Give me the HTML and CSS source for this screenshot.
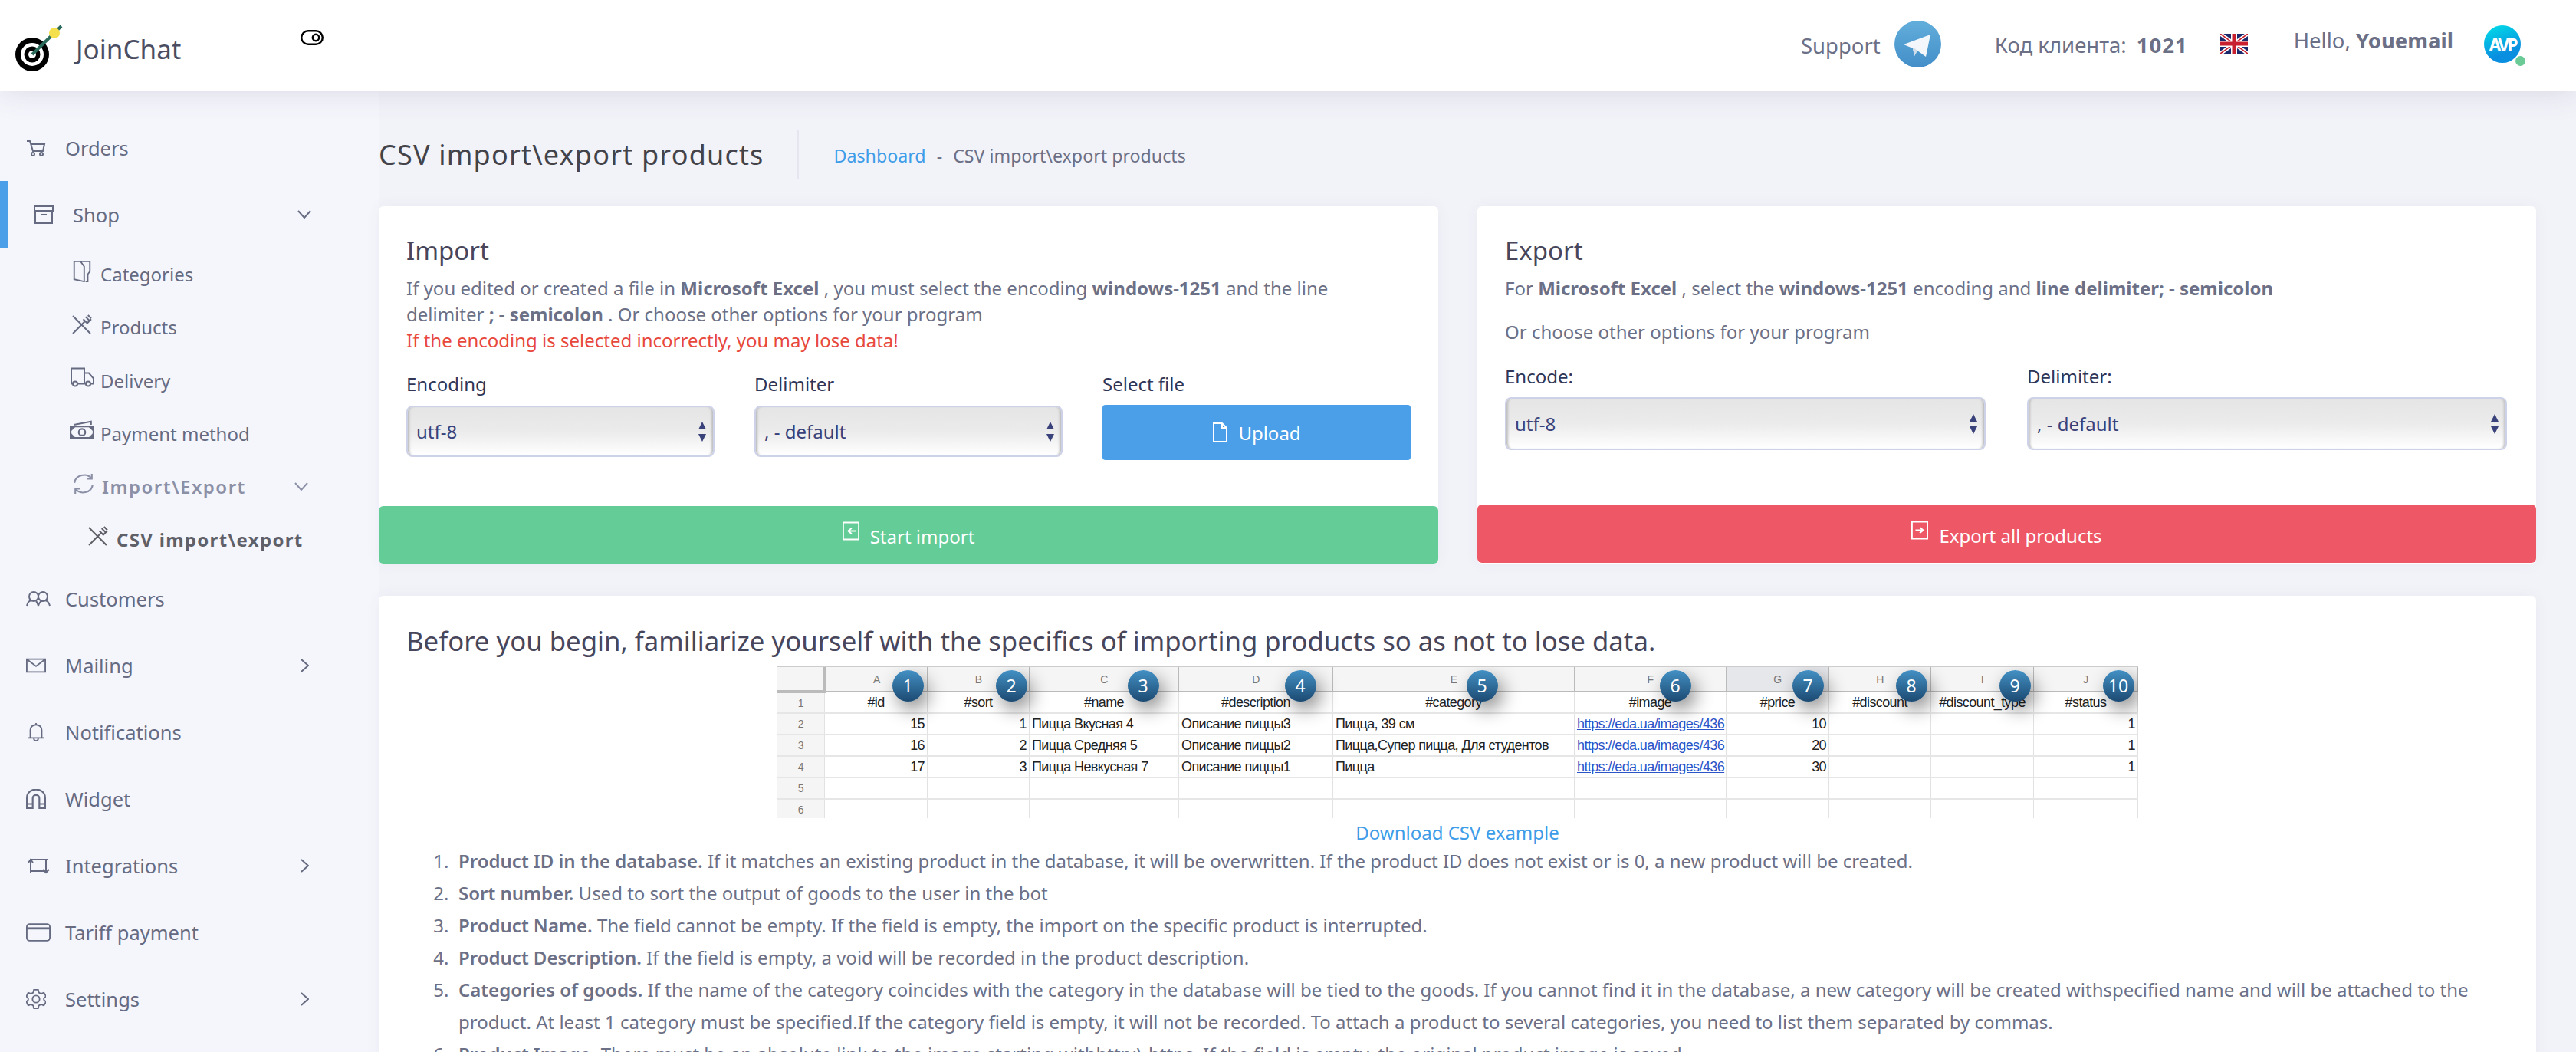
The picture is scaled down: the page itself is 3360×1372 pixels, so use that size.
FILE: index.html
```html
<!DOCTYPE html>
<html lang="en">

<head>
    <meta charset="UTF-8">
    <title>CSV import\export products</title>
    <link rel="stylesheet" href="styles.css">
</head>

<body>
    <header class="topbar">
        <a class="logo" href="#">
            <svg class="logo-mark" viewBox="0 0 70 60" width="70" height="60">
                <circle cx="22" cy="39" r="22" fill="#000" />
                <circle cx="22" cy="39" r="15" fill="#fff" />
                <circle cx="22" cy="39" r="10.5" fill="#000" />
                <circle cx="22" cy="39" r="5" fill="#fff" />
                <path d="M22 39 60 2" stroke="#2a6b5c" stroke-width="4" />
                <circle cx="51" cy="11" r="7" fill="#f4e04d" />
            </svg>
            <span>JoinChat</span>
        </a>
        <svg class="toggle" viewBox="0 0 30 20" width="30" height="20">
            <rect x="1.2" y="1.2" width="27.6" height="17.6" rx="8.8" fill="none" stroke="#000" stroke-width="2.4" />
            <circle cx="20" cy="10" r="4.2" fill="none" stroke="#000" stroke-width="2.4" />
        </svg>
        <div class="top-right">
            <span class="support">Support</span>
            <svg class="telegram" viewBox="0 0 61 61" width="61" height="61">
                <defs>
                    <linearGradient id="tg" x1="0" y1="0" x2="0" y2="1">
                        <stop offset="0" stop-color="#62aedb" />
                        <stop offset="1" stop-color="#438ec8" />
                    </linearGradient>
                </defs>
                <circle cx="30.500" cy="30.500" r="30.500" fill="url(#tg)" />
                <path d="M12 31 47 18 41 47 30 39 26 46 24 36Z" fill="#f3f7fb" />
                <path d="M24 36 26 46 30 39 25 35Z" fill="#cfdde9" />
            </svg>
            <span class="client">Код клиента: <b>1021</b></span>
            <svg class="flag" viewBox="0 0 36 26" width="36" height="26">
                <rect width="36" height="26" fill="#1a2a6c" />
                <path d="M0 0 36 26M36 0 0 26" stroke="#fff" stroke-width="5" />
                <path d="M0 0 36 26M36 0 0 26" stroke="#c8202f" stroke-width="1.6" />
                <path d="M18 0V26M0 13H36" stroke="#fff" stroke-width="8" />
                <path d="M18 0V26M0 13H36" stroke="#c8202f" stroke-width="5" />
            </svg>
            <span class="hello">Hello, <b>Youemail</b></span>
            <span class="avatar">AVP<i class="online"></i></span>
        </div>
    </header>

    <div class="page">
        <nav class="sidebar">
            <a class="nav-item" href="#">
                <span class="nav-icon"><svg viewBox="0 0 26 22"><path d="M1 2H5L9 15H22L24 6H6" /><circle cx="9" cy="19" r="2" /><circle cx="20" cy="19" r="2" /></svg></span>
                Orders
            </a>
            <a class="nav-item active" href="#">
                <span class="nav-icon"><svg viewBox="0 0 26 24"><path d="M1 1H25V7H1ZM2 7V23H24V7M9 12H17" /></svg></span>
                Shop
                <svg class="chev" viewBox="0 0 18 11"><path d="M1 1 9 10 17 1" /></svg>
            </a>
            <a class="sub-item" href="#">
                <span class="sub-icon"><svg viewBox="0 0 24 30"><path d="M1 1H23V15L20 19V29H17M1 1V26L15 29V8L10 1M1 26" /></svg></span>
                Categories
            </a>
            <a class="sub-item" href="#">
                <span class="sub-icon"><svg viewBox="0 0 25 25"><use href="#cutlery" /></svg></span>
                Products
            </a>
            <a class="sub-item" href="#">
                <span class="sub-icon"><svg class="wide" viewBox="0 0 32 25"><path d="M4 21H2V1H19V21H10M19 7H25L31 14V21H27M19 21H21" /><circle cx="7" cy="21" r="3" /><circle cx="24" cy="21" r="3" /></svg></span>
                Delivery
            </a>
            <a class="sub-item" href="#">
                <span class="sub-icon"><svg class="wide" viewBox="0 0 30 23"><path d="M1 7H29V21H1ZM5 5 26 1V5" /><circle cx="15" cy="14" r="4" /><path class="solid" d="M1 7H6L1 12ZM29 7V12L24 7ZM1 21V16L6 21ZM29 21H24L29 16Z" /></svg></span>
                Payment method
            </a>
            <a class="sub-item open" href="#">
                <span class="sub-icon"><svg viewBox="0 0 24 26"><path d="M1 12C2 2 16 -1 22 7M23 14C22 24 8 27 2 19M22 1V7H16M2 25V19H8" /></svg></span>
                Import\Export
                <svg class="chev" viewBox="0 0 18 11"><path d="M1 1 9 10 17 1" /></svg>
            </a>
            <a class="csv-item" href="#">
                <span class="sub-icon"><svg viewBox="0 0 25 25"><use href="#cutlery" /></svg></span>
                CSV import\export
            </a>
            <a class="nav-item" href="#">
                <span class="nav-icon"><svg class="wide" viewBox="0 0 32 20"><circle cx="10" cy="7" r="6" /><circle cx="22" cy="7" r="6" /><path d="M1 19C2 14 5 12 8 12M13 13C15 15 15 17 16 19M16 19C17 15 19 12 24 12 28 12 30 15 31 19" /></svg></span>
                Customers
            </a>
            <a class="nav-item" href="#">
                <span class="nav-icon"><svg viewBox="0 0 28 20"><path d="M1 1H27V19H1ZM1 1 14 11 27 1" /></svg></span>
                Mailing
                <svg class="chev side" viewBox="0 0 11 18"><path d="M1 1 10 9 1 17" /></svg>
            </a>
            <a class="nav-item" href="#">
                <span class="nav-icon"><svg viewBox="0 0 24 28"><path d="M1 22H23M4 22V11C4 1 20 1 20 11V22M12 1V3M9 23C9 27 15 27 15 23" /></svg></span>
                Notifications
            </a>
            <a class="nav-item" href="#">
                <span class="nav-icon"><svg viewBox="0 0 24 24"><path d="M1 23V11C1 -3 23 -3 23 11V23H16V11C16 6 8 6 8 11V23ZM1 18H8M16 18H23" /></svg></span>
                Widget
            </a>
            <a class="nav-item" href="#">
                <span class="nav-icon"><svg class="wide" viewBox="0 0 32 22"><path d="M6 20V3H28M3 7 6 3 9 7M6 18H26V3M22 16 26 20 30 16" /></svg></span>
                Integrations
                <svg class="chev side" viewBox="0 0 11 18"><path d="M1 1 10 9 1 17" /></svg>
            </a>
            <a class="nav-item" href="#">
                <span class="nav-icon"><svg class="wide" viewBox="0 0 34 25"><rect x="1" y="1" width="32" height="23" rx="4" /><path d="M1 7H33" stroke-width="3" /></svg></span>
                Tariff payment
            </a>
            <a class="nav-item" href="#">
                <span class="nav-icon"><svg viewBox="0 0 28 28"><path d="M11 1H17L18 5 21 6.500 25 5 28 10 25 13V15L28 18 25 23 21 21.500 18 23 17 27H11L10 23 7 21.500 3 23 0.500 18 3 15V13L0.500 10 3 5 7 6.500 10 5Z" /><circle cx="14" cy="14" r="5" /></svg></span>
                Settings
                <svg class="chev side" viewBox="0 0 11 18"><path d="M1 1 10 9 1 17" /></svg>
            </a>
        </nav>

        <main class="content">
            <div class="subheader">
                <h1>CSV import\export products</h1>
                <div class="crumbs">
                    <a href="#">Dashboard</a>
                    <span class="dash">-</span>
                    <span>CSV import\export products</span>
                </div>
            </div>

            <div class="cards">
                <section class="card">
                    <div class="card-body">
                        <h3>Import</h3>
                        <p>If you edited or created a file in <b>Microsoft Excel</b> , you must select the encoding <b>windows-1251</b> and the line<br>
                            delimiter <b>; - semicolon</b> . Or choose other options for your program<br>
                            <span class="danger">If the encoding is selected incorrectly, you may lose data!</span></p>
                        <div class="import-fields">
                            <div class="field">
                                <label>Encoding</label>
                                <div class="select-wrap">
                                    <select><option>utf-8</option><option>windows-1251</option></select>
                                    <svg class="arrows" viewBox="0 0 10 26"><path d="M5 0 10 10H0ZM5 26 0 16H10Z" /></svg>
                                </div>
                            </div>
                            <div class="field">
                                <label>Delimiter</label>
                                <div class="select-wrap">
                                    <select><option>, - default</option><option>; - semicolon</option></select>
                                    <svg class="arrows" viewBox="0 0 10 26"><path d="M5 0 10 10H0ZM5 26 0 16H10Z" /></svg>
                                </div>
                            </div>
                            <div class="field">
                                <label>Select file</label>
                                <button class="upload" type="button">
                                    <svg viewBox="0 0 20 26" width="20" height="26"><path d="M2 1H13L19 7V25H2ZM13 1V7H19" /></svg>
                                    Upload
                                </button>
                            </div>
                        </div>
                    </div>
                    <button class="wide-btn green" type="button">
                        <svg viewBox="0 0 24 26" width="22" height="25"><path d="M1 1H23V25H1ZM19 13H9M13 9 8 13 13 17" /></svg>
                        Start import
                    </button>
                </section>

                <section class="card">
                    <div class="card-body">
                        <h3>Export</h3>
                        <p>For <b>Microsoft Excel</b> , select the <b>windows-1251</b> encoding and <b>line delimiter; - semicolon</b></p>
                        <p class="second">Or choose other options for your program</p>
                        <div class="export-fields">
                            <div class="field">
                                <label>Encode:</label>
                                <div class="select-wrap tall">
                                    <select><option>utf-8</option><option>windows-1251</option></select>
                                    <svg class="arrows" viewBox="0 0 10 26"><path d="M5 0 10 10H0ZM5 26 0 16H10Z" /></svg>
                                </div>
                            </div>
                            <div class="field">
                                <label>Delimiter:</label>
                                <div class="select-wrap tall">
                                    <select><option>, - default</option><option>; - semicolon</option></select>
                                    <svg class="arrows" viewBox="0 0 10 26"><path d="M5 0 10 10H0ZM5 26 0 16H10Z" /></svg>
                                </div>
                            </div>
                        </div>
                    </div>
                    <button class="wide-btn red" type="button">
                        <svg viewBox="0 0 24 26" width="22" height="25"><path d="M1 1H23V25H1ZM6 13H16M12 9 17 13 12 17" /></svg>
                        Export all products
                    </button>
                </section>
            </div>

            <section class="card info">
                <h2>Before you begin, familiarize yourself with the specifics of importing products so as not to lose data.</h2>
                <div class="sheet">
                    <table>
                        <colgroup>
                            <col class="c0"><col class="c1"><col class="c2"><col class="c3"><col class="c4"><col class="c5"><col class="c6"><col class="c7"><col class="c8"><col class="c9"><col class="c10">
                        </colgroup>
                        <tr class="letters">
                            <th class="corner"></th><th>A</th><th>B</th><th>C</th><th>D</th><th>E</th><th>F</th><th class="picked">G</th><th>H</th><th>I</th><th>J</th>
                        </tr>
                        <tr class="names">
                            <th>1</th><td>#id</td><td>#sort</td><td>#name</td><td>#description</td><td>#category</td><td>#image</td><td>#price</td><td>#discount</td><td>#discount_type</td><td>#status</td>
                        </tr>
                        <tr>
                            <th>2</th><td class="num">15</td><td class="num">1</td><td>Пицца Вкусная 4</td><td>Описание пиццы3</td><td>Пицца, 39 см</td><td class="url"><u>https://eda.ua/images/436</u></td><td class="num">10</td><td></td><td></td><td class="num">1</td>
                        </tr>
                        <tr>
                            <th>3</th><td class="num">16</td><td class="num">2</td><td>Пицца Средняя 5</td><td>Описание пиццы2</td><td>Пицца,Супер пицца, Для студентов</td><td class="url"><u>https://eda.ua/images/436</u></td><td class="num">20</td><td></td><td></td><td class="num">1</td>
                        </tr>
                        <tr>
                            <th>4</th><td class="num">17</td><td class="num">3</td><td>Пицца Невкусная 7</td><td>Описание пиццы1</td><td>Пицца</td><td class="url"><u>https://eda.ua/images/436</u></td><td class="num">30</td><td></td><td></td><td class="num">1</td>
                        </tr>
                        <tr>
                            <th>5</th><td></td><td></td><td></td><td></td><td></td><td></td><td></td><td></td><td></td><td></td>
                        </tr>
                        <tr>
                            <th>6</th><td></td><td></td><td></td><td></td><td></td><td></td><td></td><td></td><td></td><td></td>
                        </tr>
                    </table>
                    <span class="pin p1">1</span>
                    <span class="pin p2">2</span>
                    <span class="pin p3">3</span>
                    <span class="pin p4">4</span>
                    <span class="pin p5">5</span>
                    <span class="pin p6">6</span>
                    <span class="pin p7">7</span>
                    <span class="pin p8">8</span>
                    <span class="pin p9">9</span>
                    <span class="pin p10">10</span>
                </div>
                <a class="download" href="#">Download CSV example</a>
                <ol class="rules">
                    <li><b>Product ID in the database.</b> If it matches an existing product in the database, it will be overwritten. If the product ID does not exist or is 0, a new product will be created.</li>
                    <li><b>Sort number.</b> Used to sort the output of goods to the user in the bot</li>
                    <li><b>Product Name.</b> The field cannot be empty. If the field is empty, the import on the specific product is interrupted.</li>
                    <li><b>Product Description.</b> If the field is empty, a void will be recorded in the product description.</li>
                    <li><b>Categories of goods.</b> If the name of the category coincides with the category in the database will be tied to the goods. If you cannot find it in the database, a new category will be created withspecified name and will be attached to the product. At least 1 category must be specified.If the category field is empty, it will not be recorded. To attach a product to several categories, you need to list them separated by commas.</li>
                    <li><b>Product Image.</b> There must be an absolute link to the image starting withhttp:\ https. If the field is empty, the original product image is saved.</li>
                </ol>
            </section>
        </main>
    </div>

    <!-- shared icon -->
    <svg class="defs" width="0" height="0">
        <g id="cutlery">
            <path d="M1 2 23 24M1 24 16 9M14 6 19 11 24 6M17 3 22 8M20 1 24 5" />
        </g>
    </svg>
</body>

</html>
```

FILE: styles.css
```css
* {
    box-sizing: border-box;
}

html,
body {
    height: 1372px;
    overflow: hidden;
}

body {
    margin: 0;
    font-family: "Noto Sans", Roboto, sans-serif;
    background-color: #f2f3f9;
    color: #6c7086;
}

a {
    text-decoration: none;
}

.defs {
    position: absolute;
}

/* top bar */

.topbar {
    position: relative;
    display: flex;
    align-items: center;
    height: 119px;
    padding: 0 72px 0 20px;
    background-color: #fff;
    box-shadow: 0 0 40px rgba(82, 63, 105, 0.16);
}

.logo {
    display: flex;
    align-items: center;
    width: 372px;
    font-size: 35px;
    color: #4b4e63;
}

.logo-mark {
    margin-right: 9px;
    margin-top: 4px;
}

.logo span {
    margin-top: 8px;
}

.toggle {
    margin-top: -22px;
}

.top-right {
    display: flex;
    align-items: center;
    margin-left: auto;
    margin-top: -4px;
    font-size: 27.5px;
    color: #6c7086;
}

.support {
    margin-right: 18px;
    margin-top: 4px;
}

.telegram {
    margin-right: 70px;
}

.client {
    margin-right: 42px;
    margin-top: 2px;
}

.client b {
    margin-left: 6px;
    font-weight: 700;
    letter-spacing: 1px;
}

.flag {
    margin-top: -2px;
    margin-right: 60px;
}

.hello {
    margin-right: 40px;
    margin-top: -10px;
}

.hello b {
    font-weight: 700;
}

.avatar {
    position: relative;
    display: flex;
    align-items: center;
    justify-content: center;
    width: 48px;
    height: 49px;
    border-radius: 50%;
    background: linear-gradient(160deg, #00e0e8, #0a8fe0 70%);
    color: #fff;
    font-size: 23px;
    font-weight: 700;
    letter-spacing: -3px;
}

.online {
    position: absolute;
    right: -6px;
    bottom: -4px;
    width: 13px;
    height: 13px;
    border-radius: 50%;
    background-color: #6bcb97;
}

/* sidebar */

.page {
    display: flex;
}

.sidebar {
    flex: 0 0 494px;
    height: 1253px;
    padding-top: 30px;
    background-color: #f5f6fc;
}

.nav-item,
.sub-item,
.csv-item {
    display: flex;
    align-items: center;
    color: #666b82;
}

.nav-item {
    height: 87px;
    padding: 0 88px 0 34px;
    font-size: 25.5px;
}

.nav-item.active {
    padding-left: 34px;
    border-left: 10px solid #4a9fe8;
}

.nav-icon {
    display: flex;
    flex: 0 0 51px;
}

.nav-icon svg {
    width: 26px;
    height: 26px;
}

.nav-icon svg.wide {
    width: 32px;
}

.nav-icon svg,
.sub-icon svg,
.chev {
    fill: none;
    stroke: #666b82;
    stroke-width: 2;
}

.solid {
    fill: #666b82;
}

.sub-item {
    height: 69.25px;
    padding: 0 92px 0 89px;
    font-size: 24px;
}

.sub-icon {
    display: flex;
    justify-content: center;
    flex: 0 0 36px;
    margin-right: 6px;
}

.sub-icon svg {
    width: 26px;
    height: 28px;
    margin-top: -8px;
}

.sub-icon svg.wide {
    width: 32px;
}

.sub-item.open {
    padding-left: 91px;
    color: #8b90a6;
    font-weight: 600;
    letter-spacing: 1.5px;
}

.sub-item.open svg {
    stroke: #8b90a6;
}

.csv-item {
    height: 68px;
    padding-left: 110px;
    font-size: 24px;
    font-weight: 700;
    letter-spacing: 1.3px;
    color: #5f6068;
}

.csv-item .sub-icon svg {
    stroke: #5f6068;
}

.chev {
    width: 18px;
    height: 11px;
    margin-left: auto;
}

.chev.side {
    width: 11px;
    height: 18px;
    margin-right: 3px;
}

/* content */

.content {
    flex: 1;
    padding-right: 53px;
}

.subheader {
    display: flex;
    align-items: center;
    height: 65px;
    margin: 50px 0 35px;
}

h1 {
    margin: 0;
    padding-right: 43px;
    font-size: 36px;
    font-weight: 400;
    letter-spacing: 1.2px;
    line-height: 65px;
    color: #434349;
    border-right: 2px solid #e5e6ef;
}

.crumbs {
    margin: 2px 0 0 46px;
    font-size: 23.2px;
}

.crumbs a {
    color: #3e9ce8;
}

.dash {
    margin: 0 8px;
}

.cards {
    display: grid;
    grid-template-columns: 1382px 1381px;
    gap: 51px;
    margin-bottom: 42px;
}

.card {
    display: flex;
    flex-direction: column;
    height: 466px;
    border-radius: 6px;
    background-color: #fff;
    box-shadow: 0 0 20px rgba(82, 63, 105, 0.05);
}

.card-body {
    flex: 1;
    padding: 38px 36px 0;
}

h3 {
    margin: 0 0 12px;
    font-size: 33px;
    font-weight: 400;
    line-height: 40px;
    color: #48465b;
}

p {
    margin: 0;
    font-size: 24px;
    line-height: 34px;
}

p b {
    font-weight: 700;
}

p.second {
    margin-top: 23px;
}

.danger {
    color: #e8483c;
}

.import-fields {
    display: grid;
    grid-template-columns: repeat(3, 402px);
    gap: 52px;
    margin-top: 23px;
}

.import-fields label {
    margin-bottom: 11px;
}

.export-fields {
    display: grid;
    grid-template-columns: 627px 626px;
    gap: 54px;
    margin-top: 24px;
}

label {
    display: block;
    margin-bottom: 10px;
    font-size: 24px;
    line-height: 34px;
    color: #2f3657;
}

.select-wrap {
    position: relative;
    height: 67px;
}

.select-wrap.tall {
    height: 69px;
}

select {
    width: 100%;
    height: 100%;
    padding: 0 40px 0 11px;
    appearance: none;
    font-family: inherit;
    font-size: 24px;
    color: #39427a;
    border: 2px solid #ced2e8;
    border-radius: 8px;
    background: linear-gradient(#e5e5e5, #ebebeb 50%, #fff);
    box-shadow: inset 4px 0 3px -2px #bdbdbd, inset -4px 0 3px -2px #bdbdbd;
}

.arrows {
    position: absolute;
    top: 50%;
    right: 11px;
    width: 10px;
    height: 26px;
    margin-top: -13px;
    fill: #39427a;
    pointer-events: none;
}

.upload {
    display: flex;
    align-items: center;
    justify-content: center;
    gap: 14px;
    width: 100%;
    height: 72px;
    margin-top: -1px;
    font-family: inherit;
    font-size: 24px;
    color: #fff;
    border: none;
    border-radius: 4px;
    background-color: #4a9fe8;
}

.upload svg,
.wide-btn svg {
    fill: none;
    stroke: #fff;
    stroke-width: 2;
}

.wide-btn {
    display: flex;
    align-items: center;
    justify-content: center;
    gap: 14px;
    height: 75px;
    padding-top: 5px;
    font-family: inherit;
    font-size: 24px;
    color: #fff;
    border: none;
    border-radius: 6px;
}

.wide-btn svg {
    margin-top: -14px;
}

.green {
    background-color: #64cc97;
}

.red {
    background-color: #ee5866;
}

.cards .card:last-child .wide-btn {
    height: 76px;
    margin-bottom: 1px;
}

/* info card */

.card.info {
    height: 1200px;
    padding: 36px 36px 0;
}

h2 {
    margin: 0 0 10px;
    font-size: 34.75px;
    font-weight: 400;
    line-height: 45px;
    color: #48465b;
}

.sheet {
    position: relative;
    align-self: center;
    width: 1775px;
    height: 199px;
    overflow: hidden;
    border-top: 2px solid #ccc;
}

table {
    width: 1775px;
    table-layout: fixed;
    border-collapse: collapse;
    font-family: "Liberation Sans", Arial, sans-serif;
    font-size: 18px;
    letter-spacing: -0.6px;
    color: #222;
}

.c0 { width: 62px; }
.c1 { width: 134px; }
.c2 { width: 133px; }
.c3 { width: 195px; }
.c4 { width: 201px; }
.c5 { width: 315px; }
.c6 { width: 198px; }
.c7 { width: 134px; }
.c8 { width: 133px; }
.c9 { width: 134px; }
.c10 { width: 136px; }

tr {
    height: 28px;
}

tr.letters {
    height: 32px;
    background-color: #f5f5f5;
    border-bottom: 2px solid #bbb;
}

th,
td {
    padding: 0 3px;
    overflow: hidden;
    white-space: nowrap;
    border-right: 1px solid #e2e2e2;
    border-bottom: 2px solid #e6e6e6;
}

th {
    font-size: 14px;
    font-weight: 400;
    color: #777;
    background-color: #f5f5f5;
}

tr.letters th {
    border-right-color: #bbb;
    border-bottom-color: #bbb;
}

th.corner {
    background-color: #f5f5f5;
    border-right: 4px solid #c4c4c4;
    border-bottom: 4px solid #c4c4c4;
}

th.picked {
    background-color: #e6e7eb;
}

.names td {
    text-align: center;
}

.num {
    text-align: right;
}

.url {
    overflow: hidden;
    color: #2a54c8;
    text-overflow: clip;
}

.pin {
    position: absolute;
    top: 4px;
    width: 41px;
    height: 41px;
    font-size: 23px;
    line-height: 41px;
    text-align: center;
    color: #fff;
    border-radius: 50%;
    background: linear-gradient(#4390c4, #1c4a72);
    box-shadow: 6px 10px 24px rgba(0, 0, 0, 0.45);
}

.p1 { left: 150px; }
.p2 { left: 285px; }
.p3 { left: 457px; }
.p4 { left: 662px; }
.p5 { left: 899px; }
.p6 { left: 1151px; }
.p7 { left: 1324px; }
.p8 { left: 1459px; }
.p9 { left: 1594px; }
.p10 { left: 1729px; }

.download {
    display: block;
    margin-top: 1px;
    font-size: 24px;
    line-height: 36px;
    text-align: center;
    color: #3e9ce8;
}

.rules {
    margin: -2px 0 0;
    padding: 0 0 0 68px;
    font-size: 24px;
    line-height: 42px;
}

.rules li::marker {
    content: counter(list-item) ".\00a0\00a0";
}

.rules b {
    font-weight: 600;
}
```
